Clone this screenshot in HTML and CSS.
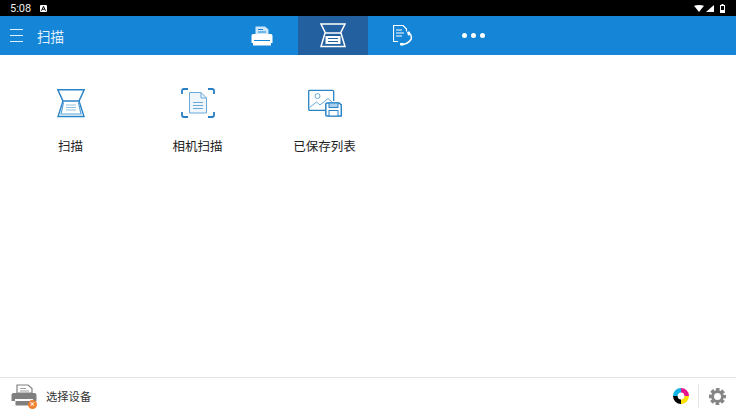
FILE: index.html
```html
<!DOCTYPE html>
<html lang="zh-CN">
<head>
<meta charset="utf-8">
<title>扫描</title>
<link rel="stylesheet" href="styles.css">
</head>
<body>
<div class="app">
  <div class="status">
    <span class="clock">5:08</span>
    <svg class="notif" width="7" height="7" viewBox="0 0 7 7"><rect width="7" height="7" rx="1" fill="#fff"/><path d="M1.500 5.800 3.500 1.300 5.500 5.800M2.500 4.300H4.500" fill="none" stroke="#000" stroke-width="1"/></svg>
    <span class="status-gap"></span>
    <svg width="10" height="7" viewBox="0 0 10 7"><path d="M0 .8Q5-.8 10 .8L5 7Z" fill="#fff"/></svg>
    <svg class="signal" width="8" height="7" viewBox="0 0 8 7"><path d="M8 0V7H0Z" fill="#fff"/></svg>
    <svg class="battery" width="5" height="9" viewBox="0 0 5 9"><path d="M1.500 0H3.500V1H5V9H0V1H1.500Z" fill="#fff"/><rect x="1" y="2" width="3" height="4" fill="#000"/></svg>
  </div>

  <header class="toolbar">
    <div class="title-area">
      <svg class="menu" width="13" height="13" viewBox="0 0 13 13"><path d="M0 .5H13M0 6.500H13M0 12.500H13" stroke="#e3f2fc" stroke-width="1"/></svg>
      <span class="title">扫描</span>
    </div>
    <nav class="tabs">
      <div class="tab">
        <svg width="22" height="20" viewBox="0 0 22 20">
          <path d="M4.500 8V.5H14L17.500 3.500V8Z" fill="#cfe6f8"/>
          <path d="M7 3.500H12M7 6H15" stroke="#1585d8" stroke-width="1.200"/>
          <path d="M2 8H20Q21.500 8 21.500 10V17H20V19.500H2V17H.5V10Q.5 8 2 8Z" fill="#fff"/>
          <path d="M3 14.500H19" stroke="#1585d8" stroke-width="1"/>
        </svg>
      </div>
      <div class="tab active">
        <svg width="26" height="25" viewBox="0 0 26 25" fill="none" stroke="#fff" stroke-width="1.500">
          <path d="M1 1H25L20.500 10H5.500Z"/>
          <path d="M5 10 1 23.500H25L21 10"/>
          <rect x="5.500" y="13" width="15" height="8" fill="#fff" stroke="none"/>
          <path d="M8 15.500H18M8 18.500H18" stroke="#22609f" stroke-width="1"/>
        </svg>
      </div>
      <div class="tab">
        <svg width="20" height="21" viewBox="0 0 20 21" fill="none" stroke="#fff" stroke-width="1.200">
          <path d="M13.500 6.500V4L10 .5H.5V16.500H5"/>
          <path d="M3 5H9M3 8H11M3 11H9"/>
          <path d="M15 7Q19.500 10 18 14.500Q15 19 9 19.500" stroke-width="1.500"/>
          <path d="M14 7 16.500 6.500 17.500 10 15 10.500ZM7 18H10.500V20.500H7Z" fill="#fff" stroke="none"/>
        </svg>
      </div>
      <div class="tab">
        <div class="dots"><i></i><i></i><i></i></div>
      </div>
    </nav>
  </header>

  <main class="grid">
    <div class="item">
      <svg width="28" height="30" viewBox="0 0 28 30" fill="none" stroke="#2a84c8" stroke-width="1.200">
        <path d="M.8 1.800H27.200L22 13H6Z" stroke-width="1.500"/>
        <path d="M6 13 1 28.500H27L22 13" stroke-width="1.400"/>
        <path d="M6.500 14.500 4 26H24L21.500 14.500" stroke="#5aa3da"/>
        <path d="M9 17H19M9 19.500H19M9 22H19" stroke="#8fc0e4" stroke-width="1"/>
      </svg>
      <span class="label">扫描</span>
    </div>
    <div class="item">
      <svg width="34" height="30" viewBox="0 0 34 30" fill="none" stroke="#2a7fc2">
        <path d="M1 6V3Q1 1 3 1H7M27 1H31Q33 1 33 3V6M1 24V27Q1 29 3 29H7M27 29H31Q33 29 33 27V24" stroke-width="1.800"/>
        <path d="M8.500 4.500H20L25.500 10V25H8.500Z" fill="#eff6fb" stroke="#6aa9d8"/>
        <path d="M20 4.500V10H25.500" stroke="#6aa9d8"/>
        <path d="M12 14.500H22M12 17.500H22M12 20.500H22" stroke="#6aa9d8"/>
      </svg>
      <span class="label">相机扫描</span>
    </div>
    <div class="item">
      <svg width="34" height="30" viewBox="0 0 34 30" fill="none" stroke="#2a84c8" stroke-width="1.300">
        <path d="M17 22.300H2Q.7 22.300 .7 21V3.500Q.7 2.300 2 2.300H24.500Q25.700 2.300 25.700 3.500V13"/>
        <circle cx="9.500" cy="8" r="2.500" stroke="#6aa9d8" stroke-width="1"/>
        <path d="M1.500 19.500 8.500 14 12 17 20 10.500 25 15" stroke="#6aa9d8" stroke-width="1"/>
        <path d="M19 15H31L33.300 17V28H19Q17.800 28 17.800 27V16Q17.800 15 19 15Z" fill="#fff" stroke-width="1.500"/>
        <rect x="21" y="15" width="9" height="4.500" fill="#a9cfec" stroke-width="1"/>
        <rect x="21" y="22.500" width="9" height="5.500" fill="#fff" stroke-width="1"/>
      </svg>
      <span class="label">已保存列表</span>
    </div>
  </main>

  <footer class="bottom">
    <div class="device">
      <span class="device-icon">
        <svg width="26" height="24" viewBox="0 0 26 24">
          <path d="M6 9V1H17L21 4.500V9Z" fill="#fff" stroke="#808080" stroke-width="1.200"/>
          <path d="M9 4.500H15M9 7H18" stroke="#a0a0a0"/>
          <path d="M2.500 9H23.500Q25.500 9 25.500 11V17H22V15H4V17H.5V11Q.5 9 2.500 9Z" fill="#808080"/>
          <path d="M4.500 17H21.500V21.500H4.500Z" fill="#808080"/>
        </svg>
        <span class="warn">×</span>
      </span>
      <span class="device-name">选择设备</span>
    </div>
    <div class="bottom-actions">
      <svg class="ink" width="16" height="16" viewBox="0 0 16 16" fill="none" stroke-width="4.600">
        <path d="M8 2.300A5.700 5.700 0 0 1 13.700 8" stroke="#e6128c"/>
        <path d="M13.700 8A5.700 5.700 0 0 1 8 13.700" stroke="#ffe000"/>
        <path d="M8 13.700A5.700 5.700 0 0 1 2.300 8" stroke="#000"/>
        <path d="M2.300 8A5.700 5.700 0 0 1 8 2.300" stroke="#12b3e6"/>
      </svg>
      <span class="sep"></span>
      <svg class="gear" width="17" height="17" viewBox="0 0 17 17" fill="none" stroke="#858585">
        <circle cx="8.500" cy="8.500" r="5" stroke-width="3"/>
        <circle cx="8.500" cy="8.500" r="7.200" stroke-width="2.600" stroke-dasharray="3.600 2.055" stroke-dashoffset="1.800"/>
      </svg>
    </div>
  </footer>
</div>
</body>
</html>
```

FILE: styles.css
```css
html,body{margin:0;padding:0;}
body{background:#fff;color:#222;font-family:"Roboto","Noto Sans CJK SC",sans-serif;}
.app{width:736px;height:414px;display:flex;flex-direction:column;overflow:hidden;}

.status{height:16px;background:#000;display:flex;align-items:center;padding:1px 10px 0;color:#fff;box-sizing:border-box;}
.clock{font-size:11px;line-height:15px;color:#eee;}
.notif{margin-left:9px;}
.status-gap{flex:1;}
.signal{margin-left:2px;}
.battery{margin-left:6px;margin-right:1px;}

.toolbar{height:39px;background:#1585d8;display:flex;align-items:stretch;color:#fff;}
.title-area{width:227px;display:flex;align-items:center;padding-left:10px;box-sizing:border-box;}
.title{font-size:13.500px;margin-left:14px;color:#e3f2fc;}
.tabs{display:flex;}
.tab{width:70.500px;display:flex;align-items:center;justify-content:center;}
.tab.active{background:#22609f;}
.dots{display:flex;gap:4px;}
.dots i{width:5px;height:5px;border-radius:50%;background:#fff;}

.grid{flex:1;display:flex;padding:33px 7px 0;align-items:flex-start;}
.item{width:127px;display:flex;flex-direction:column;align-items:center;}
.label{font-size:12.500px;line-height:18px;margin-top:20px;color:#222;}

.bottom{height:37px;box-sizing:border-box;border-top:1px solid #e4e4e4;display:flex;align-items:center;justify-content:space-between;padding:0 10px 0 11px;}
.device{display:flex;align-items:center;}
.device-icon{position:relative;display:flex;width:26px;height:24px;}
.warn{position:absolute;right:0;bottom:-1px;width:9px;height:9px;border-radius:50%;background:#ee7f2d;color:#fff;font-size:9px;line-height:9px;text-align:center;}
.device-name{font-size:11.300px;margin-left:9px;color:#333;}
.bottom-actions{display:flex;align-items:center;}
.sep{width:1px;height:24px;background:#e4e4e4;margin:0 10px 0 9px;}
```
